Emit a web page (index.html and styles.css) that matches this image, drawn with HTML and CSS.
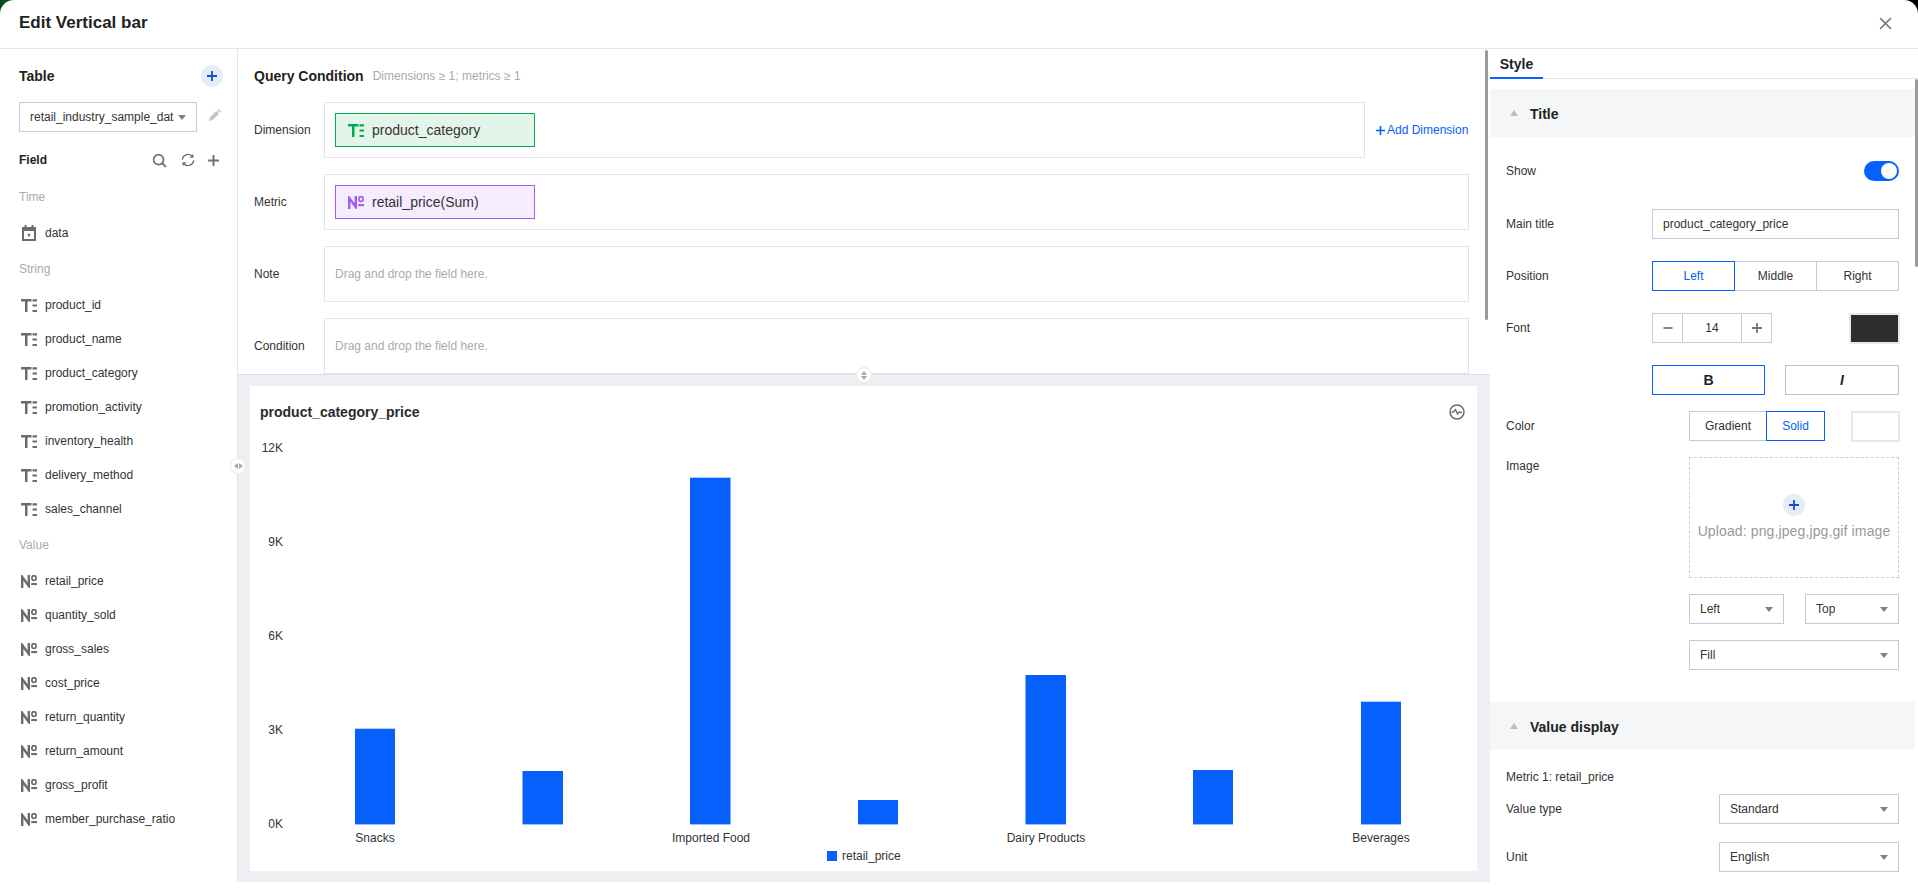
FILE: index.html
```html
<!DOCTYPE html>
<html lang="en">
<head>
<meta charset="utf-8">
<title>Edit Vertical bar</title>
<link rel="stylesheet" href="styles.css">
</head>
<body>
<svg class="defs" width="0" height="0" aria-hidden="true">
  <symbol id="i-str" viewBox="0 0 16 13"><path d="M0 0h10.500v2.400H6.500V13H4V2.400H0z" fill="currentColor"/><path d="M11.500 .3h4.500v2.100h-4.500zM11.500 5.500h4.500v2.100h-4.500zM11.500 10.900h4.500V13h-4.500z" fill="currentColor"/></symbol>
  <symbol id="i-num" viewBox="0 0 16 13"><path d="M1.200 13V2l6.600 9V0" fill="none" stroke="currentColor" stroke-width="2.400"/><ellipse cx="13" cy="3" rx="2.100" ry="2.400" fill="none" stroke="currentColor" stroke-width="1.700"/><path d="M10.200 8h5.800v2.100h-5.800z" fill="currentColor"/></symbol>
  <symbol id="i-plus" viewBox="0 0 12 12"><path d="M5.100 1h1.800v4.100H11v1.800H6.900V11H5.100V6.900H1V5.100h4.100z" fill="currentColor"/></symbol>
</svg>
<div class="modal">
  <header class="top">
    <h1 class="top-title">Edit Vertical bar</h1>
    <svg class="close" viewBox="0 0 12 12"><path d="M1 1l10 10M11 1L1 11" stroke="currentColor" stroke-width="1.500"/></svg>
  </header>
  <div class="main">
    <aside class="side">
      <div class="table-head">
        <span class="table-title">Table</span>
        <span class="add-circle"><svg class="ic12"><use href="#i-plus"/></svg></span>
      </div>
      <div class="table-pick">
        <div class="select table-select"><span class="select-text">retail_industry_sample_data</span><i class="caret"></i></div>
        <svg class="pencil" viewBox="0 0 14 14"><path d="M1 13l.7-3.400 6.600-6.600 2.700 2.700-6.600 6.600zM9.200 2.100l1.200-1.200 2.700 2.700-1.200 1.200z" fill="currentColor"/></svg>
      </div>
      <div class="field-head">
        <span class="field-title">Field</span>
        <svg class="tool tool-search" viewBox="0 0 16 16"><circle cx="7" cy="7" r="5.300" fill="none" stroke="currentColor" stroke-width="1.800"/><path d="M10.800 10.800l4 4" stroke="currentColor" stroke-width="2.200"/></svg>
        <svg class="tool tool-sync" viewBox="0 0 16 16"><path d="M1.500 7.500a6.500 6.500 0 0 1 11-4M14.500 8.500a6.500 6.500 0 0 1-11 4" fill="none" stroke="currentColor" stroke-width="1.500"/><path d="M14.300 .8v4.700H9.600zM1.700 15.200v-4.700h4.700z" fill="currentColor"/></svg>
        <svg class="tool tool-plus" viewBox="0 0 12 12"><use href="#i-plus"/></svg>
      </div>
      <div class="group">Time</div>
      <div class="item"><svg class="ficon fcal" viewBox="0 0 16 16"><path fill-rule="evenodd" d="M1 2h2.500V0h2v2h5V0h2v2H15v14H1zM3 6v8h10V6zM6.800 8.800h2.400v2.400H6.800z" fill="currentColor"/></svg>data</div>
      <div class="group">String</div>
      <div class="item"><svg class="ficon"><use href="#i-str"/></svg>product_id</div>
      <div class="item"><svg class="ficon"><use href="#i-str"/></svg>product_name</div>
      <div class="item"><svg class="ficon"><use href="#i-str"/></svg>product_category</div>
      <div class="item"><svg class="ficon"><use href="#i-str"/></svg>promotion_activity</div>
      <div class="item"><svg class="ficon"><use href="#i-str"/></svg>inventory_health</div>
      <div class="item"><svg class="ficon"><use href="#i-str"/></svg>delivery_method</div>
      <div class="item"><svg class="ficon"><use href="#i-str"/></svg>sales_channel</div>
      <div class="group">Value</div>
      <div class="item"><svg class="ficon"><use href="#i-num"/></svg>retail_price</div>
      <div class="item"><svg class="ficon"><use href="#i-num"/></svg>quantity_sold</div>
      <div class="item"><svg class="ficon"><use href="#i-num"/></svg>gross_sales</div>
      <div class="item"><svg class="ficon"><use href="#i-num"/></svg>cost_price</div>
      <div class="item"><svg class="ficon"><use href="#i-num"/></svg>return_quantity</div>
      <div class="item"><svg class="ficon"><use href="#i-num"/></svg>return_amount</div>
      <div class="item"><svg class="ficon"><use href="#i-num"/></svg>gross_profit</div>
      <div class="item"><svg class="ficon"><use href="#i-num"/></svg>member_purchase_ratio</div>
      <span class="handle handle-v"><i class="tri-l"></i><i class="tri-r"></i></span>
    </aside>
    <section class="center">
      <div class="query">
        <div class="query-head"><span class="query-title">Query Condition</span><span class="query-hint">Dimensions ≥ 1; metrics ≥ 1</span></div>
        <div class="q-row">
          <span class="q-label">Dimension</span>
          <div class="q-box">
            <div class="chip chip-green"><svg class="chip-icon"><use href="#i-str"/></svg>product_category</div>
          </div>
          <span class="add-dim"><svg class="ic10"><use href="#i-plus"/></svg>Add Dimension</span>
        </div>
        <div class="q-row">
          <span class="q-label">Metric</span>
          <div class="q-box">
            <div class="chip chip-purple"><svg class="chip-icon"><use href="#i-num"/></svg>retail_price(Sum)</div>
          </div>
        </div>
        <div class="q-row">
          <span class="q-label">Note</span>
          <div class="q-box q-empty">Drag and drop the field here.</div>
        </div>
        <div class="q-row">
          <span class="q-label">Condition</span>
          <div class="q-box q-empty">Drag and drop the field here.</div>
        </div>
        <span class="scroll-mid"></span>
      </div>
      <div class="chart-area">
        <span class="handle handle-h"><i class="tri-u"></i><i class="tri-d"></i></span>
        <div class="card">
          <div class="card-head">
            <span class="card-title">product_category_price</span>
            <svg class="card-icon" viewBox="0 0 16 16"><circle cx="8" cy="8" r="7" fill="none" stroke="currentColor" stroke-width="1.500"/><path d="M2.500 8.500l2.500-1 1.500-2 2 4.500 1.500-2 3 .5" fill="none" stroke="currentColor" stroke-width="1.400"/></svg>
          </div>
          <svg class="plot" width="1227" height="433" viewBox="0 0 1227 433">
            <g class="axis-y">
              <text x="33" y="14">12K</text>
              <text x="33" y="108">9K</text>
              <text x="33" y="202">6K</text>
              <text x="33" y="296">3K</text>
              <text x="33" y="390">0K</text>
            </g>
            <g class="bars">
              <rect x="105" y="290.700" width="40" height="95.700"/>
              <rect x="272.500" y="333" width="40.500" height="53.400"/>
              <rect x="440" y="39.700" width="40.500" height="346.700"/>
              <rect x="608" y="362" width="40" height="24.400"/>
              <rect x="775.500" y="237" width="40.500" height="149.400"/>
              <rect x="943" y="332" width="40" height="54.400"/>
              <rect x="1111" y="263.700" width="40" height="122.700"/>
            </g>
            <g class="axis-x">
              <text x="125" y="404">Snacks</text>
              <text x="461" y="404">Imported Food</text>
              <text x="796" y="404">Dairy Products</text>
              <text x="1131" y="404">Beverages</text>
            </g>
            <rect class="legend-dot" x="577" y="413" width="10" height="10"/>
            <text class="legend-text" x="592" y="422">retail_price</text>
          </svg>
        </div>
      </div>
    </section>
    <aside class="panel">
      <div class="tabs"><span class="tab">Style</span></div>
      <div class="panel-body">
        <div class="sec-head"><i class="tri-up"></i><span class="sec-text">Title</span></div>
        <div class="form">
          <div class="row row-show"><span class="lab">Show</span><span class="toggle"><i class="knob"></i></span></div>
          <div class="row"><span class="lab">Main title</span><div class="input w247">product_category_price</div></div>
          <div class="row"><span class="lab">Position</span>
            <div class="seg w247 seg-3"><span class="seg-b on">Left</span><span class="seg-b">Middle</span><span class="seg-b">Right</span></div>
          </div>
          <div class="row"><span class="lab">Font</span>
            <div class="stepper"><span class="st-b"><svg class="ic12"><path d="M1.500 5.100h9v1.800h-9z" fill="currentColor"/></svg></span><span class="st-v">14</span><span class="st-b"><svg class="ic12"><use href="#i-plus"/></svg></span></div>
            <span class="swatch swatch-dark"></span>
          </div>
          <div class="row row-bi">
            <span class="bi on bold">B</span><span class="bi ital">I</span>
          </div>
          <div class="row row-16"><span class="lab">Color</span>
            <div class="seg seg-color"><span class="seg-b">Gradient</span><span class="seg-b on">Solid</span></div>
            <span class="swatch swatch-white"></span>
          </div>
          <div class="row row-16 row-top"><span class="lab lab-top">Image</span>
            <div class="upload">
              <span class="add-circle"><svg class="ic12"><use href="#i-plus"/></svg></span>
              <span class="upload-text">Upload: png,jpeg,jpg,gif image</span>
            </div>
          </div>
          <div class="row row-16 row-end">
            <div class="select w95"><span class="select-text">Left</span><i class="caret"></i></div>
            <div class="select w94"><span class="select-text">Top</span><i class="caret"></i></div>
          </div>
          <div class="row row-end row-last">
            <div class="select w210"><span class="select-text">Fill</span><i class="caret"></i></div>
          </div>
        </div>
        <div class="sec-head"><i class="tri-up"></i><span class="sec-text">Value display</span></div>
        <div class="form form-value">
          <div class="metric">Metric 1: retail_price</div>
          <div class="row row-18"><span class="lab">Value type</span><div class="select w180"><span class="select-text">Standard</span><i class="caret"></i></div></div>
          <div class="row"><span class="lab">Unit</span><div class="select w180"><span class="select-text">English</span><i class="caret"></i></div></div>
        </div>
      </div>
      <span class="scroll-right"></span>
    </aside>
  </div>
</div>
</body>
</html>
```
FILE: styles.css
```css
* { box-sizing: border-box; }
html, body { margin: 0; height: 100%; overflow: hidden; }
body {
  background: linear-gradient(90deg, #0b4a20 50%, #000 50%);
  font-family: "Liberation Sans", Arial, sans-serif;
  font-size: 12px;
  color: #333;
}
.defs { position: absolute; }
.modal {
  width: 1918px;
  height: 888px;
  background: #fff;
  border-radius: 14px 14px 0 0;
  display: flex;
  flex-direction: column;
  overflow: hidden;
}
.top {
  height: 49px;
  flex: none;
  border-bottom: 1px solid #e7e8ee;
  display: flex;
  align-items: center;
  justify-content: space-between;
  padding: 0 26px 2px 19px;
}
.top-title { margin: 0; font-size: 17px; font-weight: bold; color: #222; }
.close { width: 13px; height: 13px; color: #7d7d7d; }
.main { flex: none; height: 833px; display: flex; }
.ic12 { width: 12px; height: 12px; display: block; }
.ic10 { width: 11px; height: 11px; display: block; margin-right: 1px; }

/* left */
.side { position: relative; flex: none; width: 238px; border-right: 1px solid #e3e4ea; }
.table-head { height: 53px; display: flex; align-items: center; justify-content: space-between; padding: 0 14px 0 19px; }
.table-title { font-size: 14px; font-weight: bold; color: #222; }
.add-circle {
  width: 22px; height: 22px; border-radius: 50%; background: #e5ecfa; color: #0a4fd8;
  display: flex; align-items: center; justify-content: center; flex: none;
}
.table-pick { display: flex; align-items: center; padding-left: 19px; gap: 11px; }
.select {
  height: 30px; border: 1px solid #c6cad8; background: #fff; display: flex; align-items: center;
  padding: 0 10px; color: #333; flex: none; justify-content: space-between;
}
.table-select { width: 178px; }
.select-text { display: block; white-space: nowrap; overflow: hidden; }
.table-select .select-text { width: 144px; }
.caret { flex: none; width: 0; height: 0; border-left: 4px solid transparent; border-right: 4px solid transparent; border-top: 5px solid #808080; }
.pencil { width: 14px; height: 14px; color: #c4c4c4; margin-top: -4px; }
.field-head { display: flex; align-items: center; height: 20px; margin: 18px 0 9px; padding: 0 17px 0 19px; }
.field-title { font-weight: bold; color: #222; margin-right: auto; }
.tool { color: #707070; flex: none; }
.tool-search { width: 15px; height: 15px; }
.tool-sync { width: 14px; height: 14px; margin-left: 14px; }
.tool-plus { width: 13px; height: 13px; margin-left: 12px; }
.group { height: 36px; margin: 1px 0; padding-left: 19px; line-height: 36px; color: #aaa; }
.item { height: 34px; display: flex; align-items: center; padding-left: 21px; color: #333; }
.ficon { width: 16px; height: 13px; margin-right: 8px; color: #6c6c6c; flex: none; }
.fcal { height: 16px; }
.handle {
  position: absolute; width: 16px; height: 16px; border-radius: 50%; background: #fff;
  border: 1px solid #e7e8ee; display: flex; align-items: center; justify-content: center; z-index: 5;
}
.handle-v { right: -9px; top: 409px; gap: 1px; }
.handle-h { left: 618px; top: -8px; flex-direction: column; gap: 1px; }
.tri-l { border-top: 3.5px solid transparent; border-bottom: 3.5px solid transparent; border-right: 4px solid #a8a8a8; }
.tri-r { border-top: 3.5px solid transparent; border-bottom: 3.5px solid transparent; border-left: 4px solid #a8a8a8; }
.tri-u { border-left: 3.5px solid transparent; border-right: 3.5px solid transparent; border-bottom: 4px solid #a8a8a8; }
.tri-d { border-left: 3.5px solid transparent; border-right: 3.5px solid transparent; border-top: 4px solid #a8a8a8; }

/* center */
.center { flex: none; width: 1252px; display: flex; flex-direction: column; }
.query { position: relative; flex: none; height: 325px; overflow: hidden; padding: 0 21px 0 16px; }
.query-head { height: 53px; display: flex; align-items: center; gap: 9px; }
.query-title { font-size: 14px; font-weight: bold; color: #222; }
.query-hint { color: #aaa; }
.q-row { display: flex; align-items: center; height: 56px; margin-bottom: 16px; }
.q-label { flex: none; width: 70px; color: #333; }
.q-box {
  flex: 1; height: 56px; border: 1px solid #e3e4ea; padding: 10px 10px;
}
.q-empty { display: flex; align-items: center; color: #aaa; padding: 0 10px; }
.add-dim { flex: none; width: 104px; padding-left: 10px; color: #0560fd; display: flex; align-items: center; white-space: nowrap; }
.chip {
  width: 200px; height: 34px; border: 1px solid; display: flex; align-items: center;
  padding-left: 12px; font-size: 14px; color: #333;
}
.chip-green { background: #e3f5ea; border-color: #00ad4c; color: #333; }
.chip-purple { background: #f5ecff; border-color: #a25cf5; }
.chip-icon { width: 16px; height: 13px; margin-right: 8px; flex: none; }
.chip-green .chip-icon { color: #00ad4c; }
.chip-purple .chip-icon { color: #a25cf5; }
.scroll-mid { position: absolute; left: 1247px; top: 1px; width: 3px; height: 270px; background: #9a9a9a; border-radius: 2px; }
.chart-area {
  position: relative; flex: none; height: 508px; background: #eff0f4; border-top: 1px solid #dcdee4;
  padding: 11px 13px 11px 12px;
}
.card { background: #fff; height: 485px; }
.card-head { height: 52px; display: flex; align-items: center; justify-content: space-between; padding: 0 12px 0 10px; }
.card-title { font-size: 14px; font-weight: bold; color: #2b2b2b; }
.card-icon { width: 16px; height: 16px; color: #6c6c6c; }
.plot { display: block; }
.plot text { font-family: "Liberation Sans", Arial, sans-serif; font-size: 12px; fill: #333; }
.axis-y text { text-anchor: end; }
.axis-x text { text-anchor: middle; }
.bars rect, .legend-dot { fill: #0560fd; }

/* right */
.panel { position: relative; flex: none; width: 428px; }
.tabs { height: 30px; border-bottom: 1px solid #e3e4ea; }
.tab {
  display: block; width: 53px; height: 30px; text-align: center; line-height: 30px;
  font-size: 14px; font-weight: bold; color: #222; border-bottom: 2px solid #0560fd;
}
.panel-body { padding-top: 10px; width: 425px; }
.sec-head {
  height: 48px; background: #f5f6f8; display: flex; align-items: center; padding-left: 20px;
  font-size: 14px; font-weight: bold; color: #222;
}
.sec-text { display: block; padding-top: 2px; }
.tri-up { width: 0; height: 0; margin-right: 12px; border-left: 4px solid transparent; border-right: 4px solid transparent; border-bottom: 6px solid #bdbdbd; }
.form { padding: 24px 16px 32px; }
.form-value { padding-top: 17px; padding-bottom: 0; }
.row { display: flex; align-items: center; height: 30px; margin-bottom: 22px; }
.row-show { height: 20px; margin-bottom: 28px; }
.row-16 { margin-bottom: 16px; }
.row-18 { margin-bottom: 18px; }
.row-last { margin-bottom: 0; }
.row-top { height: 121px; align-items: flex-start; }
.lab { color: #333; margin-right: auto; }
.lab-top { margin-top: 2px; }
.row-end { justify-content: flex-end; gap: 21px; }
.row-bi { justify-content: flex-end; gap: 20px; margin-bottom: 16px; }
.toggle { width: 35px; height: 20px; border-radius: 10px; background: #0560fd; position: relative; }
.knob { position: absolute; right: 2px; top: 2px; width: 16px; height: 16px; border-radius: 50%; background: #fff; }
.input { height: 30px; border: 1px solid #c6cad8; display: flex; align-items: center; padding: 0 10px; color: #333; }
.w247 { width: 247px; }
.w95 { width: 95px; }
.w94 { width: 94px; }
.w210 { width: 210px; }
.w180 { width: 180px; }
.seg { display: flex; height: 30px; }
.seg-3 > .seg-b { flex: 1; }
.seg-b {
  border: 1px solid #c6cad8; margin-left: -1px; display: flex; align-items: center; justify-content: center;
  color: #333; position: relative;
}
.seg-b:first-child { margin-left: 0; }
.seg-b.on { border-color: #0560fd; color: #0560fd; z-index: 1; }
.seg-color { width: 136px; margin-right: 26px; }
.seg-color .seg-b:first-child { width: 78px; }
.seg-color .seg-b:last-child { width: 59px; }
.stepper { display: flex; height: 30px; width: 120px; border: 1px solid #c6cad8; margin-right: 77px; }
.st-b { width: 29px; display: flex; align-items: center; justify-content: center; color: #777; }
.st-v { flex: 1; border-left: 1px solid #c6cad8; border-right: 1px solid #c6cad8; display: flex; align-items: center; justify-content: center; }
.swatch { display: block; flex: none; height: 31px; border: 2px solid #e7e8ee; margin-right: -1px; }
.swatch-dark { width: 51px; background: #2d2d2d; }
.swatch-white { width: 49px; background: #fff; }
.bi { width: 113px; height: 30px; border: 1px solid #c0c0c0; display: flex; align-items: center; justify-content: center; font-size: 14px; color: #222; }
.bi.on { border-color: #0560fd; width: 113px; }
.bold { font-weight: bold; }
.ital { font-style: italic; font-weight: bold; width: 114px; }
.upload {
  width: 210px; height: 121px; border: 1px dashed #cfcfcf; display: flex; flex-direction: column;
  align-items: center; justify-content: center; gap: 7px; padding-bottom: 2px;
}
.upload-text { font-size: 14px; letter-spacing: .12px; color: #999; white-space: nowrap; }
.metric { height: 20px; line-height: 20px; margin-bottom: 7px; color: #333; }
.scroll-right { position: absolute; right: 0; top: 30px; width: 3px; height: 188px; background: #9a9a9a; border-radius: 2px; }
```
